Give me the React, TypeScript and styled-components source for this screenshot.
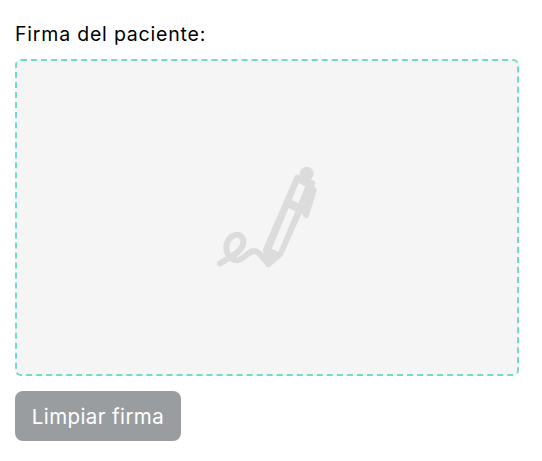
import React from 'react'
import styled, { createGlobalStyle } from 'styled-components'

const GlobalStyle = createGlobalStyle`
  html, body {
    margin: 0;
    padding: 0;
    background: #ffffff;
  }
`

const Page = styled.div`
  width: 504px;
  padding: 20px 0 0 15px;
  font-family: Inter, "Noto Sans", sans-serif;
`

const Label = styled.div`
  font-size: 19.5px;
  line-height: 28px;
  letter-spacing: 0.8px;
  color: #000000;
  margin-bottom: 11px;
`

const SignatureArea = styled.div`
  box-sizing: border-box;
  height: 317px;
  display: flex;
  align-items: center;
  justify-content: center;
  background: #f5f5f5;
  border: 2px dashed #74dbc6;
  border-radius: 6px;
`

const ClearButton = styled.button`
  display: block;
  box-sizing: border-box;
  width: 166px;
  height: 50px;
  margin-top: 15px;
  padding: 0;
  border: none;
  border-radius: 8px;
  background: #9a9d9f;
  color: #ffffff;
  font-family: inherit;
  font-size: 20.5px;
  letter-spacing: 0.4px;
`

function SignatureIcon() {
  return (
    <svg width="130" height="120" viewBox="6 9 390 360" fill="none">
      <g stroke="#dcdcdc" strokeLinecap="round" strokeLinejoin="round">
        <path
          d="M60 325 L102 300 C124 284 136 268 128 250 C118 232 92 238 82 262 C74 286 84 312 108 316 C128 318 140 292 160 288 C176 286 190 312 205 326"
          strokeWidth="18"
        />
        <path d="M292 68 L198 284 L205 328 L240 298 L336 84 Z" strokeWidth="18" fill="#dcdcdc" />
        <path d="M330 90 L341 106 L318 180 L305 150 Z" strokeWidth="18" fill="#dcdcdc" />
      </g>
      <circle cx="320" cy="56" r="21" fill="#dcdcdc" />
      <path d="M296 84 L316 94 L295 145 L275 135 Z M266 159 L286 169 L235 291 L215 281 Z" fill="#f5f5f5" />
    </svg>
  )
}

export default function App() {
  return (
    <Page>
      <GlobalStyle />
      <Label>Firma del paciente:</Label>
      <SignatureArea>
        <SignatureIcon />
      </SignatureArea>
      <ClearButton>Limpiar firma</ClearButton>
    </Page>
  )
}
